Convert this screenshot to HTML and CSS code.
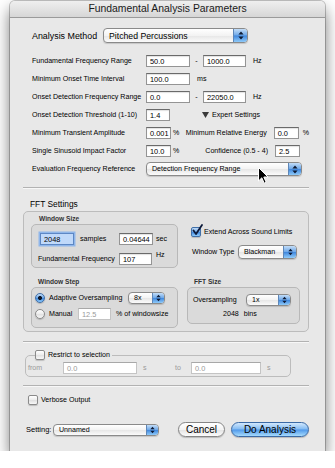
FILE: index.html
```html
<!DOCTYPE html>
<html>
<head>
<meta charset="utf-8">
<link rel="stylesheet" href="styles.css">
</head>
<body>
<div class="window">
  <div class="titlebar">Fundamental Analysis Parameters</div>
  <div class="content">
    <div class="method-row">
      <span class="method-label">Analysis Method</span>
      <div class="popup method-popup"><span class="popup-text">Pitched Percussions</span><span class="popup-arrows"><svg width="6" height="9" viewBox="0 0 6 9"><path d="M3 0.5L5.6 3.6H0.4Z M3 8.5L0.4 5.4H5.6Z"/></svg></span></div>
    </div>

    <div class="params">
      <div class="prow"><span class="plabel">Fundamental Frequency Range</span><div class="field w44">50.0</div><span class="dash">-</span><div class="field w43">1000.0</div><span class="unit">Hz</span></div>
      <div class="prow"><span class="plabel">Minimum Onset Time Interval</span><div class="field w44">100.0</div><span class="unit">ms</span></div>
      <div class="prow"><span class="plabel">Onset Detection Frequency Range</span><div class="field w44">0.0</div><span class="dash">-</span><div class="field w43">22050.0</div><span class="unit">Hz</span></div>
      <div class="prow"><span class="plabel">Onset Detection Threshold (1-10)</span><div class="field w24">1.4</div><span class="expert"><svg width="7" height="6" viewBox="0 0 7 6"><path d="M0 0H7L3.5 6Z" fill="#3a3a3a"/></svg>Expert Settings</span></div>
      <div class="prow"><span class="plabel">Minimum Transient Amplitude</span><div class="field w25">0.001</div><span class="pct">%</span><span class="rlabel">Minimum Relative Energy</span><div class="field w25">0.0</div><span class="pct2">%</span></div>
      <div class="prow"><span class="plabel">Single Sinusoid Impact Factor</span><div class="field w25">10.0</div><span class="pct">%</span><span class="rlabel">Confidence (0.5 - 4)</span><div class="field w25">2.5</div></div>
      <div class="prow"><span class="plabel">Evaluation Frequency Reference</span><div class="popup eval-popup"><span class="popup-text">Detection Frequency Range</span><span class="popup-arrows"><svg width="6" height="9" viewBox="0 0 6 9"><path d="M3 0.5L5.6 3.6H0.4Z M3 8.5L0.4 5.4H5.6Z"/></svg></span></div></div>
    </div>

    <div class="sep sep1"></div>

    <div class="section-title">FFT Settings</div>
    <div class="group-fft">
      <div class="col-left">
        <div class="subtitle st-winsize">Window Size</div>
        <div class="box winsize">
          <div class="ws-row1"><div class="field focus w34">2048</div><span class="samples">samples</span><div class="field w34">0.04644</div><span class="sec">sec</span></div>
          <div class="ws-row2"><span class="ff-label">Fundamental Frequency</span><div class="field w33">107</div><span class="hz-raised">Hz</span></div>
        </div>
        <div class="subtitle st-winstep">Window Step</div>
        <div class="box winstep">
          <div class="rrow rrow1"><span class="radio on"></span><span class="rlab-adapt">Adaptive Oversampling</span><div class="popup small-popup w37"><span class="popup-text">8x</span><span class="popup-arrows"><svg width="5" height="8" viewBox="0 0 6 9"><path d="M3 0.5L5.6 3.6H0.4Z M3 8.5L0.4 5.4H5.6Z"/></svg></span></div></div>
          <div class="rrow rrow2"><span class="radio"></span><span class="rlab-manual">Manual</span><div class="field disabled w33">12.5</div><span class="pct-win">% of windowsize</span></div>
        </div>
      </div>
      <div class="col-right">
        <div class="cbrow extend-row"><span class="cb checked"><svg class="check" width="11" height="12" viewBox="0 0 11 12"><path d="M1.5 6.5L4 10L10 1" fill="none" stroke="#0d1a3a" stroke-width="1.8" stroke-linecap="round" stroke-linejoin="round"/></svg></span><span class="cb-label">Extend Across Sound Limits</span></div>
        <div class="wtype-row"><span class="wtype-label">Window Type</span><div class="popup wtype-popup"><span class="popup-text">Blackman</span><span class="popup-arrows"><svg width="5" height="8" viewBox="0 0 6 9"><path d="M3 0.5L5.6 3.6H0.4Z M3 8.5L0.4 5.4H5.6Z"/></svg></span></div></div>
        <div class="subtitle st-fftsize">FFT Size</div>
        <div class="box fftsize">
          <div class="os-row"><span class="os-label">Oversampling</span><div class="popup small-popup w45"><span class="popup-text">1x</span><span class="popup-arrows"><svg width="5" height="8" viewBox="0 0 6 9"><path d="M3 0.5L5.6 3.6H0.4Z M3 8.5L0.4 5.4H5.6Z"/></svg></span></div></div>
          <div class="bins-row"><span>2048</span><span>bins</span></div>
        </div>
      </div>
    </div>

    <div class="sep sep2"></div>

    <fieldset class="restrict">
      <legend class="restrict-legend"><span class="cb"></span><span class="cb-label">Restrict to selection</span></legend>
      <div class="restrict-row"><span class="r-from">from</span><div class="field disabled w74">0.0</div><span class="r-s">s</span><span class="r-to">to</span><div class="field disabled w70">0.0</div><span class="r-s2">s</span></div>
    </fieldset>

    <div class="sep sep3"></div>

    <div class="cbrow verbose-row"><span class="cb"></span><span class="cb-label">Verbose Output</span></div>

    <div class="bottom-row">
      <span class="setting-label">Setting:</span>
      <div class="popup setting-popup"><span class="popup-text">Unnamed</span><span class="popup-arrows"><svg width="5" height="8" viewBox="0 0 6 9"><path d="M3 0.5L5.6 3.6H0.4Z M3 8.5L0.4 5.4H5.6Z"/></svg></span></div>
      <div class="btn btn-cancel">Cancel</div>
      <div class="btn btn-default">Do Analysis</div>
    </div>
  </div>
  <svg class="cursor" width="11" height="17" viewBox="0 0 11 17"><path d="M0.5 0.5V14L3.8 10.8L6.2 16.2L8.2 15.3L5.8 10H10Z" fill="#000" stroke="#fff" stroke-width="1"/></svg>
</div>
</body>
</html>
```

FILE: styles.css
```css
* { box-sizing: border-box; }

body {
  margin: 0;
  background: #fff;
  font-family: "Liberation Sans", Arial, sans-serif;
  color: #000;
}

.window {
  position: relative;
  margin: 1px 0 0 10px;
  width: 315px;
  height: 450px;
  background: #e8e8e8;
  border-radius: 5px 5px 0 0;
  box-shadow: 0 8px 16px rgba(0, 0, 0, 0.55), 0 0 0 1px rgba(0, 0, 0, 0.22);
}

.titlebar {
  height: 17px;
  border-bottom: 1px solid #9a9a9a;
  background: linear-gradient(#efefef, #d6d6d6);
  border-radius: 5px 5px 0 0;
  font-size: 10.4px;
  line-height: 16px;
  text-align: center;
  color: #1a1a1a;
}

.content {
  padding: 10px 16px 0 12px;
  font-size: 7.1px;
}

/* generic controls */
.field {
  flex: none;
  height: 12px;
  border: 1px solid #949494;
  border-top-color: #6a6a6a;
  background: #fff;
  font-size: 7.4px;
  line-height: 11px;
  padding-left: 3px;
  box-shadow: inset 0 1px 1px rgba(0, 0, 0, 0.12);
  white-space: nowrap;
  overflow: hidden;
}
.field.disabled {
  color: #9a9a9a;
  border-color: #c4c4c4;
  border-top-color: #a8a8a8;
  box-shadow: none;
}
.field.focus {
  background: #c0d9fa;
  border-color: #5d87c4;
  box-shadow: 0 0 0 1.5px #8fb6ea;
}
.w24 { width: 24px; }
.w25 { width: 25px; }
.w33 { width: 33px; }
.w34 { width: 34px; }
.w37 { width: 37px; }
.w43 { width: 43px; }
.w44 { width: 44px; }
.w45 { width: 45px; }
.w70 { width: 70px; }
.w74 { width: 74px; }

.popup {
  flex: none;
  display: flex;
  align-items: stretch;
  border: 1px solid #8a8a8a;
  border-radius: 4px;
  background: linear-gradient(#ffffff, #f3f3f3 50%, #e6e6e6 52%, #fbfbfb);
  box-shadow: 0 1px 1px rgba(0, 0, 0, 0.15);
  overflow: hidden;
}
.popup-text {
  flex: 1;
  display: flex;
  align-items: center;
  padding-left: 5px;
  white-space: nowrap;
}
.popup-arrows {
  flex: none;
  width: 13px;
  display: flex;
  align-items: center;
  justify-content: center;
  border-left: 1px solid #5d86b8;
  background: linear-gradient(#c3ddf8, #6ea8e8 48%, #3f86dc 52%, #8fcbfa);
}
.popup-arrows svg path { fill: #0e1a33; }

.cb {
  position: relative;
  flex: none;
  display: inline-block;
  width: 10px;
  height: 10px;
  border: 1px solid #8a8a8a;
  border-radius: 2px;
  background: linear-gradient(#ffffff, #ececec 50%, #e0e0e0 52%, #f8f8f8);
  box-shadow: 0 1px 1px rgba(0, 0, 0, 0.18);
}
.cb.checked {
  border-color: #406fa8;
  background: linear-gradient(#c3ddf8, #6ea8e8 48%, #3f86dc 52%, #8fcbfa);
}
.check {
  position: absolute;
  left: 0;
  top: -4px;
}
.cb-label { margin-left: 3px; }

.radio {
  flex: none;
  width: 10px;
  height: 10px;
  border-radius: 50%;
  border: 1px solid #8a8a8a;
  background: linear-gradient(#ffffff, #ececec 50%, #e0e0e0 52%, #f8f8f8);
  box-shadow: 0 1px 1px rgba(0, 0, 0, 0.18);
}
.radio.on {
  border-color: #406fa8;
  background: radial-gradient(circle, #101828 0 1.7px, transparent 2.3px),
    linear-gradient(#c3ddf8, #6ea8e8 48%, #3f86dc 52%, #8fcbfa);
}

.sep {
  width: 286px;
  height: 2px;
  margin-left: 1px;
  border-top: 1px solid #b2b2b2;
  border-bottom: 1px solid #f7f7f7;
}

/* method row */
.method-row {
  display: flex;
  align-items: center;
  height: 15px;
  margin-left: 10px;
}
.method-label {
  width: 71px;
  font-size: 8.9px;
}
.method-popup {
  width: 145px;
  height: 15px;
  font-size: 8.7px;
}
.method-popup .popup-arrows { width: 14px; }

/* parameter rows */
.params {
  margin: 9px 0 0 10px;
}
.prow {
  display: flex;
  align-items: center;
  height: 18px;
  white-space: nowrap;
}
.plabel {
  flex: none;
  width: 114px;
}
.dash {
  width: 13px;
  text-align: center;
}
.unit { margin-left: 7px; }
.expert {
  margin-left: 32px;
  display: flex;
  align-items: center;
  gap: 3px;
}
.pct {
  width: 8px;
  margin-left: 2px;
}
.rlabel {
  width: 87px;
  margin-right: 7px;
  text-align: right;
}
.pct2 { margin-left: 4px; }
.eval-popup {
  width: 156px;
  height: 14px;
}

.sep1 { margin-top: 9px; }

.section-title {
  margin: 10px 0 0 8px;
  height: 10px;
  line-height: 10px;
  font-size: 8.4px;
}

/* FFT group */
.group-fft {
  margin: 2px 0 0 1px;
  width: 286px;
  height: 121px;
  border: 1px solid #bcbcbc;
  border-radius: 5px;
  background: rgba(0, 0, 0, 0.025);
  padding-left: 7px;
  display: grid;
  grid-template-columns: 147px 113px;
  column-gap: 9px;
  align-items: start;
}
.subtitle {
  height: 10px;
  line-height: 10px;
  font-size: 6.6px;
  font-weight: bold;
  color: #333;
}
.st-winsize { margin: 2px 0 0 8px; }
.st-winstep { margin: 9px 0 0 7px; }
.st-fftsize { margin: 18px 0 0 7px; }

.box {
  border: 1px solid #b8b8b8;
  border-radius: 5px;
  background: rgba(0, 0, 0, 0.035);
}
.winsize {
  height: 44px;
  padding-left: 6px;
}
.ws-row1 {
  display: flex;
  align-items: center;
  height: 12px;
  margin: 8px 0 0 2px;
}
.samples {
  width: 39px;
  margin-left: 6px;
}
.sec { margin-left: 3px; }
.ws-row2 {
  display: flex;
  align-items: center;
  height: 12px;
  margin-top: 8px;
}
.ff-label { width: 81px; }
.hz-raised {
  margin-left: 4px;
  align-self: flex-start;
  margin-top: -2px;
}

.winstep {
  height: 41px;
  padding-left: 3px;
}
.rrow {
  display: flex;
  align-items: center;
  height: 12px;
}
.rrow1 { margin-top: 4px; }
.rrow2 { margin-top: 4px; }
.rlab-adapt {
  width: 79px;
  margin-left: 4px;
}
.rlab-manual {
  width: 29px;
  margin-left: 4px;
}
.small-popup { height: 12px; }
.small-popup .popup-arrows { width: 12px; }
.pct-win { margin-left: 5px; white-space: nowrap; }

.col-right { padding-top: 15px; }
.cbrow {
  display: flex;
  align-items: center;
  height: 10px;
  white-space: nowrap;
}
.extend-row { margin-left: 4px; }
.wtype-row {
  display: flex;
  align-items: center;
  height: 14px;
  margin-top: 8px;
}
.wtype-label {
  width: 46px;
  margin-left: 5px;
}
.wtype-popup {
  width: 59px;
  height: 14px;
}
.fftsize {
  height: 37px;
}
.os-row {
  display: flex;
  align-items: center;
  height: 12px;
  margin-top: 6px;
}
.os-label {
  width: 53px;
  margin-left: 5px;
}
.bins-row {
  display: flex;
  gap: 5px;
  height: 10px;
  line-height: 10px;
  margin: 3px 0 0 35px;
}

.sep2 { margin-top: 9px; }

/* restrict */
.restrict {
  margin: 7px 0 0 3px;
  width: 266px;
  height: 27px;
  padding: 0 0 0 2px;
  border: 1px solid #bcbcbc;
  border-radius: 5px;
}
.restrict-legend {
  display: flex;
  align-items: center;
  height: 10px;
  margin-left: 7px;
  padding: 0 2px 0 0;
}
.restrict-row {
  display: flex;
  align-items: center;
  height: 12px;
  margin-top: 2px;
  color: #9a9a9a;
}
.r-from { width: 35px; }
.r-s {
  width: 32px;
  margin-left: 6px;
}
.r-to { width: 16px; }
.r-s2 { margin-left: 6px; }

.sep3 { margin-top: 8px; }

.verbose-row {
  margin: 8px 0 0 6px;
}

/* bottom row */
.bottom-row {
  display: flex;
  align-items: center;
  height: 15px;
  margin: 17px 0 0 4px;
}
.setting-label {
  width: 28px;
  font-size: 7.5px;
}
.setting-popup {
  width: 106px;
  height: 12px;
}
.setting-popup .popup-arrows { width: 12px; }
.btn {
  flex: none;
  height: 15px;
  border-radius: 8px;
  border: 1px solid #858585;
  font-size: 10px;
  display: flex;
  align-items: center;
  justify-content: center;
  box-shadow: 0 1px 1px rgba(0, 0, 0, 0.2);
}
.btn-cancel {
  width: 47px;
  margin-left: 19px;
  background: linear-gradient(#ffffff, #f3f3f3 50%, #e3e3e3 52%, #fcfcfc);
}
.btn-default {
  width: 78px;
  margin-left: 6px;
  border-color: #3b6aa6;
  background: linear-gradient(#d2e8fd, #82baf2 48%, #4f98ea 52%, #a6dbfd);
}

.cursor {
  position: absolute;
  left: 248px;
  top: 166px;
}
```
